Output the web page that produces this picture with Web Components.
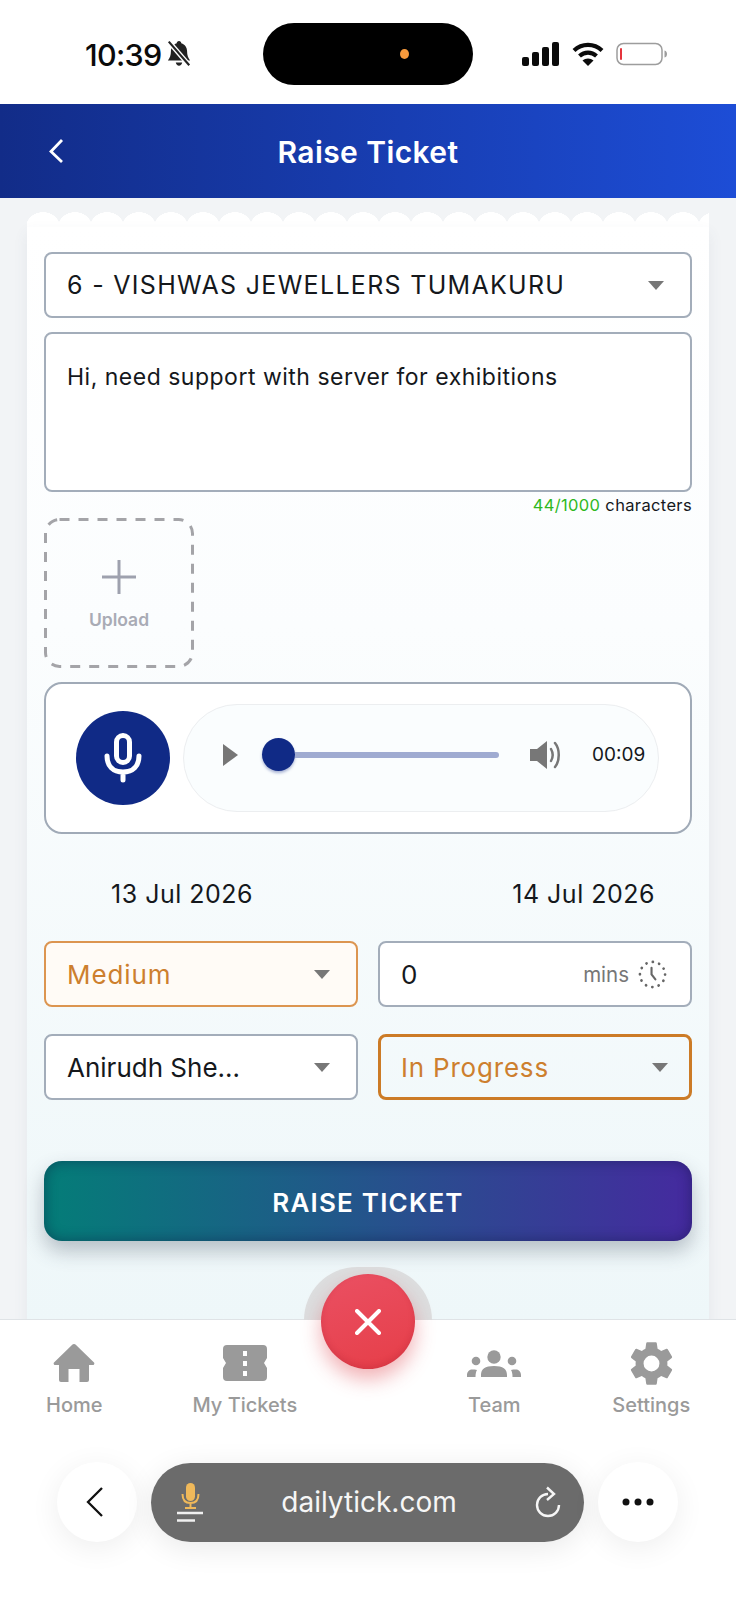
<!DOCTYPE html>
<html>
<head>
<meta charset="utf-8">
<title>Raise Ticket</title>
<style>
    html, body { margin: 0; padding: 0; background: #fff; }
    body { font-family: "Inter", "Noto Sans", sans-serif; color: #15181c; }
</style>
</head>
<body>
<phone-page>
    <status-bar slot="top"></status-bar>
    <app-header slot="top" title="Raise Ticket"></app-header>
    <ticket-card>
        <select-field style="--fs: 25px; --ls: 1.3px" text="6 - VISHWAS JEWELLERS TUMAKURU"></select-field>
        <note-box text="Hi, need support with server for exhibitions"></note-box>
        <char-count></char-count>
        <upload-box></upload-box>
        <voice-box></voice-box>
        <date-row></date-row>
        <field-grid>
            <select-field tone="soft" style="--ls: .9px" text="Medium"></select-field>
            <mins-field></mins-field>
            <select-field text="Anirudh She…"></select-field>
            <select-field tone="strong" style="--ls: .8px" text="In Progress"></select-field>
        </field-grid>
        <raise-button>RAISE TICKET</raise-button>
    </ticket-card>
    <bottom-nav slot="bottom"></bottom-nav>
    <browser-bar slot="bottom"></browser-bar>
</phone-page>

<script>
const ARROW = `<svg width="16" height="9" viewBox="0 0 16 9"><path d="M0 0h16l-8 9z" fill="#777"/></svg>`;

class PhonePage extends HTMLElement {
    constructor() {
        super();
        this.attachShadow({ mode: 'open' });
        this.shadowRoot.innerHTML = `
            <style>
                :host { display: flex; flex-direction: column; height: 1600px; width: 736px; overflow: hidden; }
                main { flex: 1; min-height: 0; overflow: hidden; background: #f2f4f6; padding: 14px 27px 0; }
            </style>
            <slot name="top"></slot>
            <main><slot></slot></main>
            <slot name="bottom"></slot>
        `;
    }
}

class StatusBar extends HTMLElement {
    constructor() {
        super();
        this.attachShadow({ mode: 'open' });
        this.shadowRoot.innerHTML = `
            <style>
                :host { display: flex; align-items: center; height: 104px; background: #fff; box-sizing: border-box; padding: 4px 65px 0 85px; }
                .time { font: 500 30.5px "Inter", sans-serif; letter-spacing: -.7px; color: #0b0b0b; width: 78px; white-space: nowrap; }
                .bell { margin-left: 2px; }
                .island { width: 210px; height: 62px; border-radius: 31px; background: #000; margin-left: 70px; margin-top: -1px; display: flex; align-items: center; justify-content: flex-end; padding-right: 64px; box-sizing: border-box; }
                .island i { width: 9px; height: 10px; border-radius: 50%; background: #f79a3c; }
                .icons { display: flex; align-items: center; margin-left: 49px; gap: 12px; }
            </style>
            <span class="time">10:39</span>
            <svg class="bell" width="28" height="28" viewBox="0 0 25 26">
                <path d="M12.5 1c1.4 0 2 1 2.1 2 3.500 1 5.400 4 5.400 7.500 0 4 1 6 2.800 8.500H2.200C4 16.500 5 14.500 5 10.500 5 7 7 4 10.400 3c.1-1 .7-2 2.100-2zM9.500 21h6c-.3 1.800-1.500 3-3 3s-2.700-1.200-3-3z" fill="#222"/>
                <path d="M3 1.500l19 22" stroke="#fff" stroke-width="4.500"/>
                <path d="M3 1.500l19 22" stroke="#222" stroke-width="2"/>
            </svg>
            <div class="island"><i></i></div>
            <div class="icons">
                <svg width="38" height="24" viewBox="0 0 38 24" fill="#0b0b0b">
                    <rect x="0" y="15" width="7" height="9" rx="2"/><rect x="10" y="10" width="7" height="14" rx="2"/>
                    <rect x="20" y="5" width="7" height="19" rx="2"/><rect x="30" y="0" width="7" height="24" rx="2"/>
                </svg>
                <svg width="32" height="24" viewBox="0 0 32 24" fill="none" stroke="#0b0b0b" stroke-width="4.200">
                    <path d="M2 8.500C10 1 22 1 30 8.500"/><path d="M7.500 14c5-4.500 12-4.500 17 0"/>
                    <path d="M16 24l-5.500-5.500c3-2.800 8-2.800 11 0z" fill="#0b0b0b" stroke="none"/>
                </svg>
                <svg width="52" height="24" viewBox="0 0 52 24" fill="none">
                    <rect x="1" y="1.500" width="45" height="21" rx="6.500" stroke="#9d9d9d" stroke-width="1.500"/>
                    <rect x="4" y="6" width="2" height="12" rx="1" fill="#e5343c"/>
                    <path d="M48.500 8.500c2 .5 2.500 2 2.500 3.500s-.5 3-2.500 3.500z" fill="#9d9d9d"/>
                </svg>
            </div>
        `;
    }
}

class AppHeader extends HTMLElement {
    constructor() {
        super();
        this.attachShadow({ mode: 'open' });
    }

    connectedCallback() {
        this.shadowRoot.innerHTML = `
            <style>
                :host { display: flex; align-items: center; justify-content: center; position: relative; height: 94px; box-sizing: border-box; padding-top: 2px; background: linear-gradient(90deg, #122c88, #1d4dd6); }
                h1 { margin: 0; font: 600 30px "Inter", sans-serif; letter-spacing: .4px; color: #fff; }
                svg { position: absolute; left: 47px; top: 34px; }
            </style>
            <svg width="18" height="26" viewBox="0 0 18 26"><path d="M15 2L4 13.500 15 24" fill="none" stroke="#fff" stroke-width="2.800"/></svg>
            <h1>${this.getAttribute('title')}</h1>
        `;
    }
}

class TicketCard extends HTMLElement {
    constructor() {
        super();
        this.attachShadow({ mode: 'open' });
        this.shadowRoot.innerHTML = `
            <style>
                :host { display: block; height: 1200px; }
                .edge { height: 15px; background: radial-gradient(ellipse 17px 15px at 16px 15px, #fff 98%, transparent 100%) 0 0 / 32px 15px repeat-x; }
                .body { height: 1100px; background: linear-gradient(180deg, #fff 0, #fbfdfe 400px, #eef7f9 1094px); padding: 25px 17px 0; display: flex; flex-direction: column; box-shadow: 0 6px 14px rgba(80, 90, 110, .08); }
            </style>
            <div class="edge"></div>
            <div class="body"><slot></slot></div>
        `;
    }
}

class SelectField extends HTMLElement {
    constructor() {
        super();
        this.attachShadow({ mode: 'open' });
    }

    connectedCallback() {
        const tone = this.getAttribute('tone') || 'plain';
        this.setAttribute('tone', tone);
        this.shadowRoot.innerHTML = `
            <style>
                :host { display: flex; align-items: center; justify-content: space-between; height: 66px; box-sizing: border-box; padding: 0 26px 0 21px; background: #fff; border: 2px solid #a3adba; border-radius: 8px; font-size: var(--fs, 26px); color: #15181c; }
                :host([tone="soft"]) { background: #fffbf6; border-color: #dc9550; color: #cd7f2e; }
                :host([tone="strong"]) { background: transparent; border: 3px solid #cc7b26; color: #cd7f2e; padding-left: 20px; padding-right: 21px; }
                span { white-space: nowrap; letter-spacing: var(--ls, 0); }
            </style>
            <span>${this.getAttribute('text')}</span>
            ${ARROW}
        `;
    }
}

class NoteBox extends HTMLElement {
    constructor() {
        super();
        this.attachShadow({ mode: 'open' });
    }

    connectedCallback() {
        this.shadowRoot.innerHTML = `
            <style>
                :host { display: block; height: 160px; margin-top: 14px; box-sizing: border-box; padding: 27px 21px; background: #fff; border: 2px solid #a3adba; border-radius: 8px; font-size: 23px; line-height: 32px; letter-spacing: .5px; }
            </style>
            ${this.getAttribute('text')}
        `;
    }
}

class CharCount extends HTMLElement {
    constructor() {
        super();
        this.attachShadow({ mode: 'open' });
        this.shadowRoot.innerHTML = `
            <style>
                :host { display: block; height: 26px; line-height: 26px; text-align: right; font-size: 16.5px; letter-spacing: .35px; color: #15181c; }
                b { font-weight: 400; color: #2fb81f; }
            </style>
            <b>44/1000</b> characters
        `;
    }
}

class UploadBox extends HTMLElement {
    constructor() {
        super();
        this.attachShadow({ mode: 'open' });
        this.shadowRoot.innerHTML = `
            <style>
                :host { display: flex; flex-direction: column; align-items: center; position: relative; width: 150px; height: 150px; box-sizing: border-box; padding-top: 41px; color: #a9abb5; font-size: 17.5px; font-weight: 600; }
                .dash { position: absolute; left: 0; top: 0; }
                span { margin-top: 14px; }
            </style>
            <svg class="dash" width="150" height="150" viewBox="0 0 150 150"><rect x="1.500" y="1.500" width="147" height="147" rx="14" fill="none" stroke="#a4a4a8" stroke-width="3" stroke-dasharray="10 9"/></svg>
            <svg width="36" height="36" viewBox="0 0 36 36"><path d="M18 1v34M1 18h34" stroke="#9ea1ae" stroke-width="3"/></svg>
            <span>Upload</span>
        `;
    }
}

class VoiceBox extends HTMLElement {
    constructor() {
        super();
        this.attachShadow({ mode: 'open' });
        this.shadowRoot.innerHTML = `
            <style>
                :host { display: flex; align-items: center; gap: 13px; height: 152px; margin-top: 14px; box-sizing: border-box; padding: 0 31px 0 30px; background: #fff; border: 2px solid #a0aab7; border-radius: 18px; }
                .mic { width: 94px; height: 94px; flex: none; border-radius: 50%; background: #102a86; display: flex; align-items: center; justify-content: center; }
                .player { flex: 1; height: 108px; box-sizing: border-box; border: 1px solid #eceef0; border-radius: 54px; background: #fafdfe; display: flex; align-items: center; padding: 0 13px 6px 39px; margin-top: -1px; }
                .thumb { width: 33px; height: 33px; flex: none; margin-left: 24px; border-radius: 50%; background: #102a86; box-shadow: 0 2px 3px rgba(16, 42, 134, .35); }
                .track { width: 204px; height: 6px; flex: none; border-radius: 0 3px 3px 0; background: #9fabd1; }
                .speaker { margin-left: 31px; }
                .time { margin-left: 30px; font-size: 19px; color: #15181c; }
            </style>
            <div class="mic">
                <svg width="38" height="50" viewBox="0 0 38 50" fill="none" stroke="#fff" stroke-width="5" stroke-linecap="round">
                    <rect x="12.500" y="2.500" width="13" height="27" rx="6.500"/>
                    <path d="M3 23c0 10 6 16 16 16s16-6 16-16M19 39v8"/>
                </svg>
            </div>
            <div class="player">
                <svg width="15" height="22" viewBox="0 0 15 22"><path d="M0 0l15 11L0 22z" fill="#767676"/></svg>
                <div class="thumb"></div>
                <div class="track"></div>
                <svg class="speaker" width="32" height="30" viewBox="0 0 32 30" fill="none">
                    <path d="M0 9h7l10-8v28L7 21H0z" fill="#777"/>
                    <path d="M21 9c2 3.500 2 8.500 0 12M25 3c5 6 5 18 0 24" stroke="#777" stroke-width="2.500" stroke-linecap="round"/>
                </svg>
                <span class="time">00:09</span>
            </div>
        `;
    }
}

class DateRow extends HTMLElement {
    constructor() {
        super();
        this.attachShadow({ mode: 'open' });
        this.shadowRoot.innerHTML = `
            <style>
                :host { display: flex; justify-content: space-between; height: 107px; box-sizing: border-box; padding: 44px 37px 0 67px; font-size: 25px; line-height: 32px; letter-spacing: .5px; color: #15181c; }
            </style>
            <span>13 Jul 2026</span><span>14 Jul 2026</span>
        `;
    }
}

class FieldGrid extends HTMLElement {
    constructor() {
        super();
        this.attachShadow({ mode: 'open' });
        this.shadowRoot.innerHTML = `
            <style>
                :host { display: grid; grid-template-columns: 314px 314px; column-gap: 20px; row-gap: 27px; }
            </style>
            <slot></slot>
        `;
    }
}

class MinsField extends HTMLElement {
    constructor() {
        super();
        this.attachShadow({ mode: 'open' });
        this.shadowRoot.innerHTML = `
            <style>
                :host { display: flex; align-items: center; height: 66px; box-sizing: border-box; padding: 0 23px 0 21px; background: #fff; border: 2px solid #a3adba; border-radius: 8px; font-size: 26px; color: #15181c; }
                .unit { margin-left: auto; margin-right: 9px; font-size: 20.5px; color: #777; }
            </style>
            <span>0</span>
            <span class="unit">mins</span>
            <svg width="29" height="29" viewBox="0 0 30 30" fill="none" stroke="#666">
                <circle cx="15" cy="15" r="13" stroke-width="2.800" stroke-linecap="round" stroke-dasharray="0.1 6.700"/>
                <path d="M14 8v7l4 5" stroke-width="2.200" stroke-linecap="round"/>
            </svg>
        `;
    }
}

class RaiseButton extends HTMLElement {
    constructor() {
        super();
        this.attachShadow({ mode: 'open' });
        this.shadowRoot.innerHTML = `
            <style>
                :host { display: flex; align-items: center; justify-content: center; height: 80px; box-sizing: border-box; padding-top: 3px; margin-top: 61px; border-radius: 18px; background: linear-gradient(90deg, #047d78, #452a9f); box-shadow: 0 10px 20px rgba(60, 70, 90, .32), inset 0 0 14px rgba(10, 20, 60, .45); color: #fff; font-size: 26px; font-weight: 600; letter-spacing: 1.2px; }
            </style>
            <slot></slot>
        `;
    }
}

class NavItem extends HTMLElement {
    constructor() {
        super();
        this.attachShadow({ mode: 'open' });
    }

    connectedCallback() {
        this.shadowRoot.innerHTML = `
            <style>
                :host { display: flex; flex: none; flex-direction: column; align-items: center; color: #9a9a9a; font-size: 20px; line-height: 26px; font-weight: 500; }
                .icon { height: 46px; display: flex; align-items: center; justify-content: center; }
                span { margin-top: 6px; white-space: nowrap; }
            </style>
            <div class="icon"><slot></slot></div>
            <span>${this.getAttribute('label')}</span>
        `;
    }
}

class BottomNav extends HTMLElement {
    constructor() {
        super();
        this.attachShadow({ mode: 'open' });
        this.shadowRoot.innerHTML = `
            <style>
                :host { display: flex; position: relative; height: 121px; box-sizing: border-box; padding: 20px 0 0 46px; background: #fff; border-top: 1px solid #dfe3e6; }
                .tickets { margin-left: 90px; }
                .team { margin-left: 170px; }
                .settings { margin-left: 91px; }
                .ring { position: absolute; left: 304px; top: -53px; width: 128px; height: 53px; border-radius: 64px 64px 0 0; background: #dcdedf; }
                .fab { position: absolute; left: 321px; top: -46px; width: 94px; height: 95px; border-radius: 50%; background: linear-gradient(160deg, #ea5063, #e63e48); box-shadow: 0 10px 20px rgba(220, 60, 70, .4), inset 0 -3px 6px rgba(150, 20, 40, .2); display: flex; align-items: center; justify-content: center; }
            </style>
            <nav-item label="Home">
                <svg width="42" height="38" viewBox="0 0 42 38" fill="#9a9a9a"><path d="M21 0a2 2 0 0 1 1.500.6L41 18.500c.8.9.2 2.500-1 2.500h-4v15a2 2 0 0 1-2 2h-7.500V25h-11v13H8a2 2 0 0 1-2-2V21H2c-1.200 0-1.800-1.600-1-2.500L19.500.6A2 2 0 0 1 21 0z"/></svg>
            </nav-item>
            <nav-item class="tickets" label="My Tickets">
                <svg width="44" height="36" viewBox="0 0 44 36" fill="#9a9a9a"><path d="M4 0h36a4 4 0 0 1 4 4v9l-3 5 3 5v9a4 4 0 0 1-4 4H4a4 4 0 0 1-4-4v-9l3-5-3-5V4a4 4 0 0 1 4-4z"/><path d="M22 6v5M22 16v5M22 26v5" stroke="#fff" stroke-width="4"/></svg>
            </nav-item>
            <nav-item class="team" label="Team">
                <svg width="54" height="27" viewBox="0 0 54 27" fill="#9a9a9a"><circle cx="27" cy="7" r="6.700"/><circle cx="9" cy="11" r="4.300"/><circle cx="45" cy="11" r="4.300"/><path d="M14 27v-2c0-6 4-9 13-9s13 3 13 9v2zM0 27v-2c0-3 2-5.500 5-5.500 2 0 3.500 0 5 .5-1 1.500-1.500 4-1.500 7zM54 27v-2c0-3-2-5.500-5-5.500-2 0-3.500 0-5 .5 1 1.500 1.500 4 1.500 7z"/></svg>
            </nav-item>
            <nav-item class="settings" label="Settings">
                <svg width="53" height="53" viewBox="0 0 24 24" fill="#9a9a9a"><path d="M19.140 12.940c.04-.3.060-.61.060-.94 0-.32-.02-.64-.07-.94l2.030-1.580a.49.49 0 0 0 .12-.61l-1.920-3.320a.49.49 0 0 0-.59-.22l-2.390.96c-.5-.38-1.030-.7-1.620-.94l-.36-2.540a.48.48 0 0 0-.48-.41h-3.840a.47.47 0 0 0-.47.41l-.36 2.540c-.59.24-1.130.57-1.620.94l-2.390-.96a.48.48 0 0 0-.59.22L2.740 8.870a.48.48 0 0 0 .12.61l2.030 1.580c-.05.3-.09.63-.09.94s.02.64.07.94l-2.030 1.580a.49.49 0 0 0-.12.61l1.920 3.320c.12.22.37.29.59.22l2.390-.96c.5.38 1.030.7 1.620.94l.36 2.540c.05.24.24.41.48.41h3.840c.24 0 .44-.17.47-.41l.36-2.540c.59-.24 1.130-.56 1.620-.94l2.390.96c.22.08.47 0 .59-.22l1.920-3.320a.48.48 0 0 0-.12-.61l-2.010-1.580zM12 15.600A3.600 3.600 0 1 1 12 8.400a3.600 3.600 0 0 1 0 7.200z"/></svg>
            </nav-item>
            <div class="ring"></div>
            <div class="fab">
                <svg width="26" height="26" viewBox="0 0 26 26"><path d="M2 2l22 22M24 2L2 24" stroke="#fff" stroke-width="4" stroke-linecap="round"/></svg>
            </div>
        `;
    }
}

class BrowserBar extends HTMLElement {
    constructor() {
        super();
        this.attachShadow({ mode: 'open' });
        this.shadowRoot.innerHTML = `
            <style>
                :host { display: flex; align-items: center; height: 160px; box-sizing: border-box; padding: 0 58px 36px 57px; gap: 14px; background: #fff; }
                .round { width: 80px; height: 80px; flex: none; border-radius: 50%; background: #fff; display: flex; align-items: center; justify-content: center; box-shadow: 0 6px 30px rgba(0, 0, 0, .07); }
                .back { margin-right: 4px; }
                .pill { flex: 1; height: 79px; border-radius: 40px; background: #6b6b6b; box-shadow: 0 6px 30px rgba(0, 0, 0, .09); display: flex; align-items: center; justify-content: space-between; padding: 0 23px 0 26px; color: #f6f6f6; font: 400 28px "Inter", sans-serif; }
            </style>
            <div class="round">
                <svg class="back" width="20" height="32" viewBox="0 0 20 32"><path d="M17 2L3 16l14 14" fill="none" stroke="#111" stroke-width="2.300"/></svg>
            </div>
            <div class="pill">
                <svg width="26" height="40" viewBox="0 0 26 40" fill="none">
                    <rect x="9" y="1" width="9" height="18" rx="4.500" fill="#f0b95a"/>
                    <path d="M5.500 12c0 6 3 9 8 9s8-3 8-9M13.500 21v4M8 26h11" stroke="#f0b95a" stroke-width="2"/>
                    <path d="M0 31h26M0 38.500h18" stroke="#f0f0f0" stroke-width="2.400"/>
                </svg>
                <span>dailytick.com</span>
                <svg width="26" height="32" viewBox="0 0 26 32" fill="none" stroke="#f6f6f6" stroke-width="2.400">
                    <path d="M13 8A11 11 0 1 0 24 19"/><path d="M12 1.500l7 6.500-7 6"/>
                </svg>
            </div>
            <div class="round">
                <svg width="32" height="8" viewBox="0 0 32 8" fill="#111"><circle cx="4" cy="4" r="3.500"/><circle cx="16" cy="4" r="3.500"/><circle cx="28" cy="4" r="3.500"/></svg>
            </div>
        `;
    }
}

customElements.define('phone-page', PhonePage);
customElements.define('status-bar', StatusBar);
customElements.define('app-header', AppHeader);
customElements.define('ticket-card', TicketCard);
customElements.define('select-field', SelectField);
customElements.define('note-box', NoteBox);
customElements.define('char-count', CharCount);
customElements.define('upload-box', UploadBox);
customElements.define('voice-box', VoiceBox);
customElements.define('date-row', DateRow);
customElements.define('field-grid', FieldGrid);
customElements.define('mins-field', MinsField);
customElements.define('raise-button', RaiseButton);
customElements.define('nav-item', NavItem);
customElements.define('bottom-nav', BottomNav);
customElements.define('browser-bar', BrowserBar);
</script>
</body>
</html>
